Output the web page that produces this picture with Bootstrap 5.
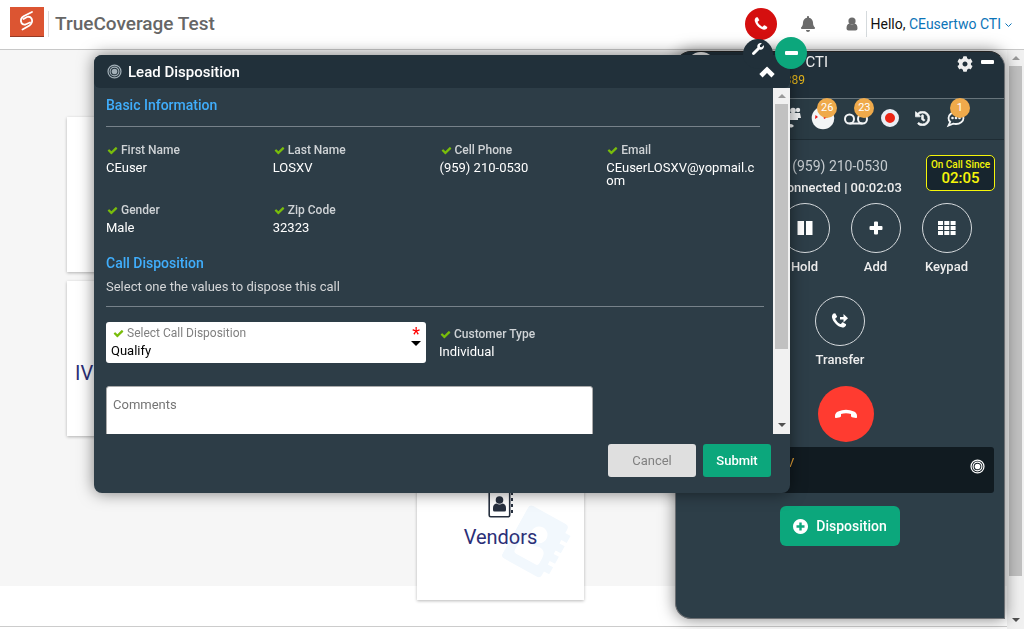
<!DOCTYPE html>
<html lang="en">
<head>
<meta charset="utf-8">
<meta name="viewport" content="width=device-width, initial-scale=1">
<title>TrueCoverage Test</title>
<link href="https://cdn.jsdelivr.net/npm/bootstrap@5.3.0/dist/css/bootstrap.min.css" rel="stylesheet">
<script src="https://cdn.jsdelivr.net/npm/bootstrap@5.3.0/dist/js/bootstrap.bundle.min.js"></script>
<style>
  body { font-family: Roboto, "Liberation Sans", sans-serif; font-size: 13px; line-height: 16px; background: #fff; overflow: hidden; }
  svg { display: block; fill: currentColor; }
  a { color: #0c74b8; text-decoration: none; }
  button { font-family: inherit; }
  .medium { font-weight: 500; }

  /* top bar */
  .topbar { height: 50px; border-bottom: 1px solid #c8c8c8; color: #6b6b6b; padding: 0 12px 1px 10px; }
  .brand-title { font-size: 19px; line-height: 26px; color: #666; margin-left: 6px; }
  .brand-rule { width: 1px; height: 26px; background: #ddd; }
  .call-btn { width: 32px; height: 32px; background: #d50f0f; }
  .hello { font-size: 14px; color: #111; border-left: 1px solid #d5dadd; padding: 5px 0 5px 4px; }

  /* dashboard tiles */
  .board { background: #f6f6f6; padding: 67px 67px 0; }
  .tiles { display: grid; grid-template-columns: repeat(3, 167px); grid-auto-rows: 155px; gap: 9px 8px; margin-bottom: -14px; }
  .tile { background: #fff; box-shadow: 0 1px 3px rgba(0,0,0,.28); font-size: 20px; line-height: 24px; color: #2b2f77; }
  .tile-ivr { grid-column: 1; grid-row: 2; padding: 80px 8px 0; }
  .tile-vendors { grid-column: 3; grid-row: 3; padding-top: 43px; gap: 7px; }
  .tile-ghost { right: 6px; top: 56px; color: #f2f8fd; }
  .tile-icon { color: #27303f; }
  .baseline { border-top: 1px solid #ccc; height: 3px; }

  /* scroll tracks */
  .track { width: 17px; background: #f1f1f1; padding: 0 2px; }
  .track i { border: 4px solid transparent; margin: 0 auto; width: 0; height: 0; }
  .track .up { border-bottom-color: #999; border-top: 0; margin-top: 6px; margin-bottom: 6px; }
  .track .down { border-top: 4px solid #505050; border-bottom: 0; margin-top: auto; margin-bottom: 7px; }
  .thumb { background: #c1c1c1; width: 100%; }

  /* softphone */
  .phone { top: 51px; left: 675px; right: 19px; bottom: 10px; background: #2d3e48; color: #eee; border: 1px solid #6c6f73; border-top-color: #222; border-radius: 16px 16px 0 16px; box-shadow: 0 0 16px rgba(0,0,0,.5); z-index: 10; }
  .phone-head { height: 47px; background: #21303a; border-bottom: 1px solid #67747b; border-radius: 15px 15px 0 0; }
  .avatar { width: 30px; height: 30px; background: #e8e8e8; top: 0; left: 10px; }
  .who { width: 152px; }
  .who-name { font-size: 15px; line-height: 20px; }
  .who-ext { font-size: 12px; color: #e4b51c; padding-right: 23px; }
  .head-tools { padding: 4px 10px 0 0; }
  .tools { height: 41px; background: #2a3b44; border-bottom: 1px solid #1e2c34; padding: 0 36px 2px 102px; color: #f3f5f6; }
  .tool { width: 24px; height: 24px; }
  .note { position: absolute; top: -8px; left: 6px; width: 20px; height: 20px; border-radius: 50%; background: #efaa4b; font-size: 11px; line-height: 20px; text-align: center; color: #fff; }
  .rec { width: 18px; height: 18px; background: #ec2414; border: 4px solid #e9edf4; }
  .dialed { font-size: 14px; line-height: 20px; color: #c5cbcf; padding-top: 16px; }
  .timer { top: 103px; right: 9px; width: 69px; height: 36px; border: 1px solid #f5f50a; border-radius: 5px; background: #17252e; color: #f5f50a; padding-top: 3px; font-weight: 500; }
  .timer-label { font-size: 10px; line-height: 12px; }
  .timer-value { font-size: 15px; line-height: 15px; }
  .keys { display: grid; grid-template-columns: repeat(4, 71px); justify-content: center; padding: 7px 0 21px; }
  .ring { display: block; margin: 0 auto 6px; width: 50px; height: 50px; border: 1px solid #d6dadd; background: none; color: #fff; padding: 0; }
  .skip { grid-column: 2; }
  .hang-row { padding: 18px 0 5px 12px; }
  .hang { width: 56px; height: 56px; background: #ff3b30; color: #fff; }
  .lead-bar { background: #111b21; height: 46px; margin: 0 10px 13px; padding: 8px 9px 0 100px; border-radius: 3px; color: #e9a53a; }
  .btn-go { background: #0ca77c; color: #fff; font-weight: 500; }
  .btn-dispo { font-size: 14px; width: 120px; height: 40px; border-radius: 6px; }

  /* lead disposition window */
  .lead-win { top: 55px; left: 94px; right: 234px; height: 438px; background: #2d3d47; color: #fff; border-radius: 8px 0 8px 8px; box-shadow: 0 0 16px rgba(0,0,0,.5); z-index: 20; }
  .lead-head { height: 33px; flex-shrink: 0; background: #21303a; border-radius: 8px 0 6px 6px; padding: 0 15px 0 13px; font-size: 15px; }
  .lead-head-icon { color: #a3b0b8; margin-right: 6px; }
  .lead-body { padding: 9px 0 0 12px; overflow: hidden; }
  .sect { font-size: 14px; line-height: 16px; color: #40aefc; margin: 0; font-weight: 500; }
  .line { height: 1px; background: #77828a; margin: 13px 13px 15px 0; }
  .line-wide { margin: 11px 9px 15px 0; }
  .tag { font-size: 12px; line-height: 16px; color: #cfd3d6; font-weight: 500; }
  .val { line-height: 13px; padding-top: 3px; word-break: break-all; }
  .tick { width: 11px; height: 11px; color: #79bd0b; margin: 0 3px 0 1px; }
  .field { height: 53px; padding-right: 12px; }
  .fields { row-gap: 7px; }
  .hint { color: #d4d6d8; padding-top: 8px; }
  .pick { background: #fff; border-radius: 3px; width: 320px; height: 41px; }
  .pick select { appearance: none; border: 0; background: none; width: 100%; height: 41px; padding: 16px 5px 0; font-size: 13px; color: #000; }
  .pick label { top: 3px; left: 6px; color: #808080; font-weight: 400; }
  .pick .star { top: 4px; right: 6px; color: #f00; font-size: 18px; }
  .pick .arrow { top: 19px; right: 5px; border: 5px solid transparent; border-top-color: #000; border-bottom: 0; }
  .beside { padding: 4px 0 0 13px; }
  .notes { width: 487px; height: 80px; border: 1px solid #aaa; border-radius: 3px; padding: 10px 6px; resize: none; font-size: 13px; background: #fff; margin-top: 23px; }
  .notes::placeholder { color: #757575; }
  .lead-foot { height: 59px; flex-shrink: 0; padding: 10px 19px 0 0; gap: 7px; }
  .lead-foot .btn { height: 33px; font-size: 13px; padding: 0; border-radius: 3px; width: 68px; border: 0; }
  .lead-foot .btn-quiet { width: 88px; background: #dfdfdf; color: #808080; }

  /* round window handles */
  .tab-wrench { top: 39px; left: 743px; width: 30px; height: 30px; background: #21303a; color: #fff; z-index: 21; padding: 4px 0 0 9px; }
  .tab-min { top: 37px; left: 775px; width: 32px; height: 32px; background: #0ca77c; z-index: 22; }
  .dash { width: 13px; height: 4px; border-radius: 1px; background: #fff; }
</style>
</head>
<body>
<svg width="0" height="0" class="position-absolute" aria-hidden="true">
  <defs>
    <symbol id="check" viewBox="0 0 1792 1792"><path d="M1671 566q0 40-28 68l-724 724-136 136q-28 28-68 28t-68-28l-136-136-362-362q-28-28-28-68t28-68l136-136q28-28 68-28t68 28l294 295 656-657q28-28 68-28t68 28l136 136q28 28 28 68z"/></symbol>
    <symbol id="handset" viewBox="0 0 1792 1792"><path d="M1600 1240q0 27-10 70.500t-21 68.500q-21 50-122 106-94 51-186 51-27 0-53-3.500t-57.500-12.500-47-14.500-55.500-20.500-49-18q-98-35-175-83-127-79-264-216t-216-264q-48-77-83-175-3-9-18-49t-20.500-55.500-14.500-47-12.500-57.500-3.500-53q0-92 51-186 56-101 106-122 25-11 68.500-21t70.500-10q14 0 21 3 18 6 53 76 11 19 30 54t35 63.500 31 53.500q3 4 17.500 25t21.500 35.500 7 28.500q0 20-28.500 50t-62 55-62 53-28.500 46q0 9 5 22.500t8.500 20.500 14 24 11.500 19q76 137 174 235t235 174q2 1 19 11.500t24 14 20.500 8.500 22.500 5q18 0 46-28.500t53-62 55-62 50-28.500q14 0 28.500 7t35.500 21.500 25 17.500q25 15 53.500 31t63.500 35 54 30q70 35 76 53 3 7 3 21z"/></symbol>
    <symbol id="target" viewBox="0 0 16 16"><g fill="none" stroke="currentColor"><circle cx="8" cy="8" r="6.900" stroke-width="1.300"/><circle cx="8" cy="8" r="4.700" stroke-width="1.200"/></g><circle cx="8" cy="8" r="3"/></symbol>
    <symbol id="book" viewBox="0 0 26 30"><rect x="1.200" y="1.200" width="20.500" height="27.600" rx="1.500" fill="none" stroke="currentColor" stroke-width="1.600"/><path d="M23 4h2v3h-2zM23 10h2v3h-2zM23 16h2v3h-2zM23 22h2v3h-2z"/><circle cx="11.500" cy="12" r="3.800"/><path d="M5 22v-2q0-4 3.500-4.500 3 2 6 0Q18 16 18 20v2q0 1.500-1.500 1.500h-10Q5 23.500 5 22z"/></symbol>
    <symbol id="book-solid" viewBox="0 0 26 30"><path fill-rule="evenodd" d="M2 0h18.500q2 0 2 2v2h3v4h-3v2h3v4h-3v2h3v4h-3v2h3v4h-3v2q0 2-2 2H2q-2 0-2-2V2q0-2 2-2zM11.500 7a4.200 4.200 0 1 0 .010 0zM4.500 23.500q0 1.500 1.500 1.500h11q1.500 0 1.500-1.500v-3q0-4-4-4-3 1.500-6 0-4 0-4 4z"/></symbol>
  </defs>
</svg>

<div class="d-flex flex-column vh-100">
  <header class="topbar d-flex align-items-center">
    <svg class="mb-1" width="34" height="30" viewBox="0 0 34 30" aria-label="TrueCoverage logo"><rect width="34" height="30" fill="#dc5532"/><rect y="29" width="34" height="1" fill="#963a25"/><path d="M22 5 14 9Q9.500 11.500 11.500 16 12.500 18 15.500 17.500L20 15.500M12.500 22.500 19.500 18.500Q23.500 15.500 21.500 11.500 20 9 17 10L13.500 12" fill="none" stroke="#fff" stroke-width="1.800" stroke-linecap="round"/></svg>
    <span class="brand-rule ms-1"></span>
    <span class="brand-title medium">TrueCoverage Test</span>
    <div class="ms-auto d-flex align-items-center">
      <button class="call-btn btn rounded-circle p-0 border-0 text-white d-flex align-items-center justify-content-center" aria-label="Call"><svg width="16" height="16"><use href="#handset"/></svg></button>
      <svg class="ms-4" width="14" height="16" viewBox="0 0 448 512" aria-label="Alerts"><path d="M224 512c35.320 0 63.970-28.650 63.970-64H160.030c0 35.350 28.650 64 63.970 64zm215.390-149.710c-19.320-20.760-55.470-51.990-55.470-154.290 0-77.700-54.480-139.900-127.940-155.160V32c0-17.670-14.320-32-31.980-32s-31.980 14.330-31.980 32v20.840C118.560 68.100 64.080 130.300 64.080 208c0 102.300-36.150 133.530-55.470 154.290-6 6.450-8.660 14.160-8.610 21.710.110 16.400 12.980 32 32.100 32h383.800c19.120 0 32-15.600 32.100-32 .050-7.550-2.610-15.270-8.610-21.710z"/></svg>
      <svg class="ms-4 me-2" width="19" height="14" viewBox="0 0 19 14" aria-label="Profile"><circle cx="13" cy="4" r="3.600"/><path d="M7.500 11.500Q7.500 7 10.500 6.500q2.500 2 5 0 3 .500 3 5 0 2-2 2h-7q-2 0-2-2z"/></svg>
      <div class="hello">Hello, <a href="#">CEusertwo CTI<svg class="d-inline ms-1" width="7" height="5" viewBox="0 0 7 5"><path d="M.5.5l3 3 3-3" fill="none" stroke="#0c74b8"/></svg></a></div>
    </div>
  </header>

  <div class="d-flex flex-grow-1">
    <main class="flex-grow-1 d-flex flex-column">
      <div class="board">
        <div class="tiles">
          <div class="tile"></div>
          <div class="tile tile-ivr">IV</div>
          <div class="tile tile-vendors position-relative d-flex flex-column align-items-center">
            <svg class="tile-ghost position-absolute" width="80" height="84" viewBox="0 0 80 84"><g transform="rotate(29 40 42)"><use href="#book-solid" x="14" y="10" width="52" height="64"/></g></svg>
            <svg class="tile-icon position-relative" width="26" height="30"><use href="#book"/></svg>
            <span class="position-relative">Vendors</span>
          </div>
        </div>
      </div>
      <div class="baseline mt-auto"></div>
    </main>
    <div class="track d-flex flex-column"><i class="up"></i><div class="thumb" style="height:88%"></div><i class="down"></i></div>
  </div>
</div>

<aside class="phone position-fixed">
  <div class="phone-head position-relative d-flex justify-content-between">
    <div class="avatar position-absolute rounded-circle"></div>
    <div class="who text-end"><div class="who-name">CTI</div><div class="who-ext">389</div></div>
    <div class="head-tools d-flex gap-2">
      <svg width="16" height="16" viewBox="0 0 512 512" aria-label="Settings"><path d="M487.400 315.700l-42.600-24.600c4.300-23.200 4.300-47 0-70.200l42.600-24.600c4.900-2.800 7.100-8.600 5.500-14-11.100-35.600-30-67.800-54.700-94.600-3.800-4.100-10-5.100-14.800-2.300L380.800 110c-17.900-15.400-38.500-27.300-60.800-35.100V25.800c0-5.600-3.900-10.500-9.400-11.700-36.700-8.200-74.300-7.800-109.200 0-5.500 1.200-9.400 6.100-9.400 11.700V75c-22.200 7.900-42.800 19.800-60.800 35.100L88.700 85.500c-4.900-2.800-11-1.900-14.800 2.300-24.700 26.700-43.600 58.900-54.700 94.600-1.700 5.400.6 11.200 5.500 14L67.300 221c-4.300 23.200-4.300 47 0 70.200l-42.600 24.600c-4.900 2.800-7.100 8.600-5.500 14 11.100 35.600 30 67.800 54.700 94.600 3.800 4.100 10 5.100 14.800 2.300l42.600-24.600c17.900 15.400 38.500 27.300 60.800 35.100v49.200c0 5.600 3.900 10.500 9.400 11.700 36.700 8.200 74.300 7.800 109.200 0 5.500-1.200 9.400-6.100 9.400-11.700v-49.200c22.200-7.900 42.800-19.800 60.800-35.100l42.600 24.600c4.900 2.800 11 1.900 14.800-2.300 24.700-26.700 43.600-58.900 54.700-94.600 1.500-5.500-.7-11.300-5.600-14.100zM256 336c-44.100 0-80-35.900-80-80s35.900-80 80-80 80 35.900 80 80-35.900 80-80 80z"/></svg>
      <div class="dash mt-1"></div>
    </div>
  </div>
  <div class="tools d-flex align-items-center justify-content-between">
    <div class="tool"><svg width="24" height="24" viewBox="0 0 24 24"><circle cx="10" cy="4" r="2.200"/><circle cx="15" cy="4.500" r="2.800"/><circle cx="20" cy="4" r="2.200"/><path d="M8 7h14l1 5h-3v2H10v-2H7zM9 20q4-4 7 0l-2 1.500H9z"/></svg></div>
    <div class="tool position-relative"><svg width="24" height="24" viewBox="0 0 24 24"><circle cx="12" cy="12" r="11.300"/><path d="M7 11l-2.500-2L4 13zM12 8l5 3-4 2z" fill="#e11"/></svg><span class="note">26</span></div>
    <div class="tool position-relative"><svg width="24" height="24" viewBox="0 0 24 24"><g fill="none" stroke="currentColor" stroke-width="2"><circle cx="5.500" cy="13" r="4.500"/><circle cx="18.500" cy="13" r="4.500"/><path d="M5.500 17.500h13"/></g></svg><span class="note ms-1">23</span></div>
    <div class="tool d-flex align-items-center justify-content-center"><div class="rec rounded-circle"></div></div>
    <div class="tool d-flex align-items-center justify-content-center"><svg width="15" height="15" viewBox="0 0 512 512"><path d="M504 255.531c.253 136.640-111.180 248.372-247.820 248.468-59.015.042-113.223-20.530-155.822-54.911-11.077-8.940-11.905-25.541-1.839-35.607l11.267-11.267c8.609-8.609 22.353-9.551 31.891-1.984C173.062 425.135 212.781 440 256 440c101.705 0 184-82.311 184-184 0-101.705-82.311-184-184-184-48.814 0-93.149 18.969-126.068 49.932l50.754 50.754c10.080 10.080 2.941 27.314-11.313 27.314H24c-8.837 0-16-7.163-16-16V38.627c0-14.254 17.234-21.393 27.314-11.314l49.372 49.372C129.209 34.136 189.552 8 256 8c136.810 0 247.747 110.780 248 247.531zm-180.912 78.784l9.823-12.630c8.138-10.463 6.253-25.542-4.210-33.679L288 256.349V152c0-13.255-10.745-24-24-24h-16c-13.255 0-24 10.745-24 24v135.651l65.409 50.874c10.463 8.137 25.541 6.253 33.679-4.210z" stroke="currentColor" stroke-width="22"/></svg></div>
    <div class="tool position-relative"><svg width="24" height="24" viewBox="0 0 24 24"><path d="M12 6c4 0 7.500 2.500 7.500 6s-3.500 6-7.500 6c-1 0-2-.100-2.800-.400L4.500 19.500l1.700-3.700C4.900 14.800 4.500 13.400 4.500 12c0-3.500 3.500-6 7.500-6z" fill="none" stroke="currentColor" stroke-width="1.800"/><circle cx="8.500" cy="12" r="1.300"/><circle cx="12" cy="12" r="1.300"/><circle cx="15.500" cy="12" r="1.300"/></svg><span class="note">1</span></div>
  </div>
  <div class="timer position-absolute text-center"><div class="timer-label">On Call Since</div><div class="timer-value">02:05</div></div>
  <div class="text-center medium">
    <div class="dialed fw-normal">(959) 210-0530</div>
    <div class="pt-1">Connected | 00:02:03</div>
    <div class="keys">
      <div class="skip"><button class="ring rounded-circle" aria-label="Hold"><svg class="mx-auto" width="16" height="16" viewBox="0 0 16 16"><path d="M.5 1h6.500v14H.5zM9 1h6.500v14H9z"/></svg></button>Hold</div>
      <div><button class="ring rounded-circle" aria-label="Add"><svg class="mx-auto" width="14" height="14" viewBox="0 0 14 14"><path d="M5 1.500q0-1 1-1h2q1 0 1 1V5h3.500q1 0 1 1v2q0 1-1 1H9v3.500q0 1-1 1H6q-1 0-1-1V9H1.500q-1 0-1-1V6q0-1 1-1H5z"/></svg></button>Add</div>
      <div><button class="ring rounded-circle" aria-label="Keypad"><svg class="mx-auto" width="18" height="14" viewBox="0 0 18 14"><path d="M0 0h5v4H0zM6.300 0h5v4h-5zM12.600 0h5v4h-5zM0 5h5v4H0zM6.300 5h5v4h-5zM12.600 5h5v4h-5zM0 10h5v4H0zM6.300 10h5v4h-5zM12.600 10h5v4h-5z"/></svg></button>Keypad</div>
    </div>
    <div><button class="ring rounded-circle" aria-label="Transfer"><svg class="mx-auto" width="18" height="18" viewBox="0 0 18 18"><use href="#handset" x="-1" y="0" width="18" height="18"/><path d="M9 5h3.500V2L17 6.200l-4.500 4.300V7.500H9z"/></svg></button>Transfer</div>
    <div class="hang-row d-flex justify-content-center"><button class="hang btn rounded-circle border-0 p-0" aria-label="Hang up"><svg class="mx-auto" width="24" height="24" viewBox="0 0 24 24"><path d="M1 14Q1 11 4 9.500 12 6 20 9.500 23 11 23 14v1.200q0 1-1 .800l-4-.700q-1-.200-1-1.200v-2q-5-1.600-10 0v2q0 1-1 1.200l-4 .700q-1 .200-1-.800z"/></svg></button></div>
  </div>
  <div class="lead-bar d-flex justify-content-between"><span>V</span><svg class="mt-1 text-white" width="15" height="15"><use href="#target"/></svg></div>
  <div class="text-center"><button class="btn btn-go btn-dispo p-0 d-inline-flex align-items-center justify-content-center gap-2"><svg width="15" height="15" viewBox="0 0 15 15"><path fill-rule="evenodd" d="M7.500 0a7.500 7.500 0 1 0 .010 0zM6.300 3.500h2.400v2.800h2.800v2.400H8.700v2.800H6.300V8.700H3.500V6.300h2.800z"/></svg>Disposition</button></div>
</aside>

<section class="lead-win position-fixed d-flex flex-column">
  <div class="lead-head d-flex align-items-center">
    <svg class="lead-head-icon" width="15" height="15"><use href="#target"/></svg>
    <span class="medium">Lead Disposition</span>
    <svg class="ms-auto" width="16" height="12" viewBox="0 0 16 12" aria-label="Collapse"><path d="M8 .5l7.700 7.500L12.500 11.500 8 7l-4.500 4.500L.3 8z"/></svg>
  </div>
  <div class="d-flex flex-grow-1 overflow-hidden">
    <div class="lead-body flex-grow-1">
      <h2 class="sect">Basic Information</h2>
      <div class="line"></div>
      <div class="row g-0 fields">
        <div class="col-3 field"><div class="tag d-flex align-items-center"><svg class="tick"><use href="#check"/></svg>First Name</div><div class="val">CEuser</div></div>
        <div class="col-3 field"><div class="tag d-flex align-items-center"><svg class="tick"><use href="#check"/></svg>Last Name</div><div class="val">LOSXV</div></div>
        <div class="col-3 field"><div class="tag d-flex align-items-center"><svg class="tick"><use href="#check"/></svg>Cell Phone</div><div class="val">(959) 210-0530</div></div>
        <div class="col-3 field"><div class="tag d-flex align-items-center"><svg class="tick"><use href="#check"/></svg>Email</div><div class="val">CEuserLOSXV@yopmail.com</div></div>
        <div class="col-3 field"><div class="tag d-flex align-items-center"><svg class="tick"><use href="#check"/></svg>Gender</div><div class="val">Male</div></div>
        <div class="col-3 field"><div class="tag d-flex align-items-center"><svg class="tick"><use href="#check"/></svg>Zip Code</div><div class="val">32323</div></div>
      </div>
      <h2 class="sect">Call Disposition</h2>
      <div class="hint">Select one the values to dispose this call</div>
      <div class="line line-wide"></div>
      <div class="d-flex">
        <div class="pick position-relative">
          <label class="tag position-absolute d-flex align-items-center" for="dispo"><svg class="tick"><use href="#check"/></svg>Select Call Disposition</label>
          <select id="dispo"><option>Qualify</option></select>
          <span class="star position-absolute">*</span><span class="arrow position-absolute"></span>
        </div>
        <div class="beside"><div class="tag d-flex align-items-center"><svg class="tick"><use href="#check"/></svg>Customer Type</div><div class="val">Individual</div></div>
      </div>
      <textarea class="notes d-block" aria-label="Comments" placeholder="Comments"></textarea>
    </div>
    <div class="track d-flex flex-column flex-shrink-0"><i class="up"></i><div class="thumb" style="height:245px"></div><i class="down"></i></div>
  </div>
  <div class="lead-foot d-flex justify-content-end">
    <button class="btn btn-quiet">Cancel</button>
    <button class="btn btn-go">Submit</button>
  </div>
</section>
<div class="tab-wrench position-fixed rounded-circle"><svg width="12" height="12" viewBox="0 0 512 512"><path d="M507.730 109.100c-2.240-9.030-13.540-12.090-20.120-5.510l-74.360 74.360-67.880-11.310-11.310-67.880 74.360-74.360c6.620-6.620 3.430-17.900-5.660-20.160-47.380-11.740-99.550.910-136.580 37.930-39.640 39.640-50.550 97.100-34.050 147.200L18.740 402.760c-24.990 24.990-24.990 65.510 0 90.500 24.990 24.990 65.510 24.990 90.500 0l213.210-213.210c50.120 16.710 107.470 5.680 147.370-34.220 37.070-37.070 49.700-89.320 37.910-136.730z"/></svg></div>
<button class="tab-min btn position-fixed rounded-circle border-0 p-0 d-flex align-items-center justify-content-center" aria-label="Minimize"><span class="dash"></span></button>
</body>
</html>
